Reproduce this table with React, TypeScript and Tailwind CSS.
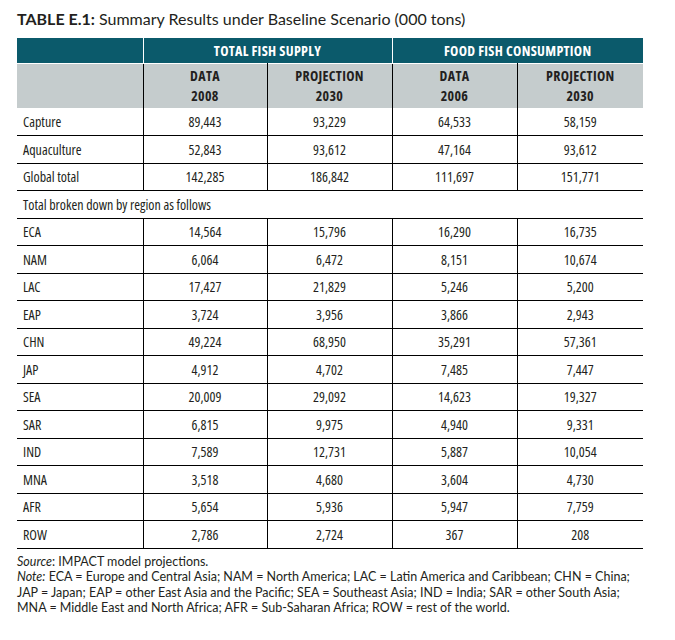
import React from "react";

const font = { fontFamily: '"Open Sans", sans-serif', fontStretch: "75%" };
const text = { fontFamily: 'Lato, "Open Sans", sans-serif' };

const top = [
  ["Capture", "89,443", "93,229", "64,533", "58,159"],
  ["Aquaculture", "52,843", "93,612", "47,164", "93,612"],
  ["Global total", "142,285", "186,842", "111,697", "151,771"],
];
const regions = [
  ["ECA", "14,564", "15,796", "16,290", "16,735"],
  ["NAM", "6,064", "6,472", "8,151", "10,674"],
  ["LAC", "17,427", "21,829", "5,246", "5,200"],
  ["EAP", "3,724", "3,956", "3,866", "2,943"],
  ["CHN", "49,224", "68,950", "35,291", "57,361"],
  ["JAP", "4,912", "4,702", "7,485", "7,447"],
  ["SEA", "20,009", "29,092", "14,623", "19,327"],
  ["SAR", "6,815", "9,975", "4,940", "9,331"],
  ["IND", "7,589", "12,731", "5,887", "10,054"],
  ["MNA", "3,518", "4,680", "3,604", "4,730"],
  ["AFR", "5,654", "5,936", "5,947", "7,759"],
  ["ROW", "2,786", "2,724", "367", "208"],
];

function Row({ r }: { r: string[] }) {
  return (
    <tr className="h-[27.5px] border-b border-black">
      <td className="pl-[6px] text-left border-r border-black">{r[0]}</td>
      {r.slice(1).map((v, i) => (
        <td key={i} className={`text-center ${i < 3 ? "border-r border-black" : ""}`}>{v}</td>
      ))}
    </tr>
  );
}

export default function App() {
  return (
    <div className="w-[675px] h-[640px] bg-white text-[#231f20] pl-[17px] pt-[9px]">
      <div className="text-[16px] leading-[20px]" style={text}>
        <span className="font-bold">TABLE E.1:</span> Summary Results under Baseline Scenario (000 tons)
      </div>
      <table className="mt-[9px] w-[626px] border-collapse table-fixed text-[14px]" style={font}>
        <colgroup>
          <col className="w-[126px]" />
          <col className="w-[124px]" />
          <col className="w-[125px]" />
          <col className="w-[125px]" />
          <col className="w-[126px]" />
        </colgroup>
        <thead>
          <tr className="h-[25px] bg-[#0b5a6b] text-white font-bold text-[14px] tracking-[0.3px]">
            <th className="border-r border-white"></th>
            <th colSpan={2} className="border-r border-white text-center">TOTAL FISH SUPPLY</th>
            <th colSpan={2} className="text-center">FOOD FISH CONSUMPTION</th>
          </tr>
          <tr className="h-[45px] bg-[#c5cccd] border-t border-white border-b border-black font-bold text-[14px] leading-[20px] tracking-[0.3px]">
            <th className="border-r border-black"></th>
            <th className="border-r border-black text-center">DATA<br />2008</th>
            <th className="border-r border-black text-center">PROJECTION<br />2030</th>
            <th className="border-r border-black text-center">DATA<br />2006</th>
            <th className="text-center">PROJECTION<br />2030</th>
          </tr>
        </thead>
        <tbody>
          {top.map((r) => <Row key={r[0]} r={r} />)}
          <tr className="h-[27.5px] border-b border-black">
            <td colSpan={5} className="pl-[6px] text-left">Total broken down by region as follows</td>
          </tr>
          {regions.map((r) => <Row key={r[0]} r={r} />)}
        </tbody>
      </table>
      <div className="mt-[5px] text-[12.5px] leading-[15.5px] w-[640px]" style={text}>
        <div><i>Source</i>: IMPACT model projections.</div>
        <div><i>Note:</i> ECA = Europe and Central Asia; NAM = North America; LAC = Latin America and Caribbean; CHN = China;</div>
        <div>JAP = Japan; EAP = other East Asia and the Pacific; SEA = Southeast Asia; IND = India; SAR = other South Asia;</div>
        <div>MNA = Middle East and North Africa; AFR = Sub-Saharan Africa; ROW = rest of the world.</div>
      </div>
    </div>
  );
}
